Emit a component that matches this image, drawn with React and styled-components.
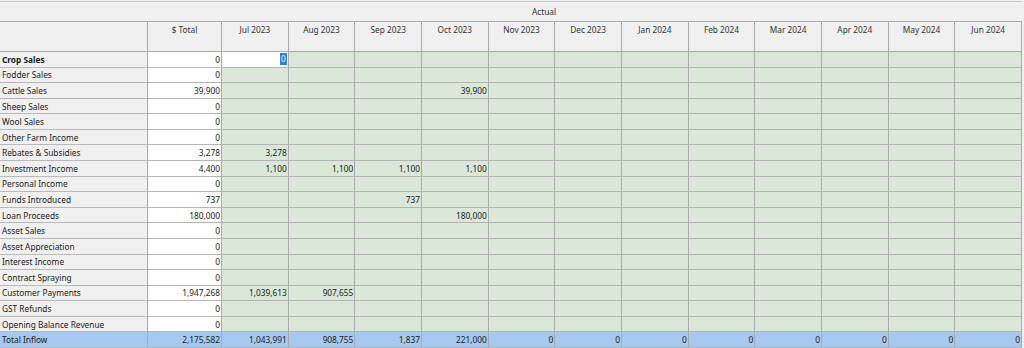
import React from 'react';
import styled, { createGlobalStyle } from 'styled-components';

const months = ['Jul 2023', 'Aug 2023', 'Sep 2023', 'Oct 2023', 'Nov 2023', 'Dec 2023', 'Jan 2024', 'Feb 2024', 'Mar 2024', 'Apr 2024', 'May 2024', 'Jun 2024'];

// month values keyed by column index
const rows = [
  { label: 'Crop Sales', total: '0', bold: true, values: {}, editing: true },
  { label: 'Fodder Sales', total: '0', values: {} },
  { label: 'Cattle Sales', total: '39,900', values: { 3: '39,900' } },
  { label: 'Sheep Sales', total: '0', values: {} },
  { label: 'Wool Sales', total: '0', values: {} },
  { label: 'Other Farm Income', total: '0', values: {} },
  { label: 'Rebates & Subsidies', total: '3,278', values: { 0: '3,278' } },
  { label: 'Investment Income', total: '4,400', values: { 0: '1,100', 1: '1,100', 2: '1,100', 3: '1,100' } },
  { label: 'Personal Income', total: '0', values: {} },
  { label: 'Funds Introduced', total: '737', values: { 2: '737' } },
  { label: 'Loan Proceeds', total: '180,000', values: { 3: '180,000' } },
  { label: 'Asset Sales', total: '0', values: {} },
  { label: 'Asset Appreciation', total: '0', values: {} },
  { label: 'Interest Income', total: '0', values: {} },
  { label: 'Contract Spraying', total: '0', values: {} },
  { label: 'Customer Payments', total: '1,947,268', values: { 0: '1,039,613', 1: '907,655' } },
  { label: 'GST Refunds', total: '0', values: {} },
  { label: 'Opening Balance Revenue', total: '0', values: {} },
];

const totals = ['1,043,991', '908,755', '1,837', '221,000', '0', '0', '0', '0', '0', '0', '0', '0'];

const App = () => {
  return (
    <>
      <GlobalStyle />
      <Sheet>
        <Band>Actual</Band>
        <HeaderCell />
        <HeaderCell>$ Total</HeaderCell>
        {months.map((m) => (
          <HeaderCell key={m}>{m}</HeaderCell>
        ))}

        {rows.map((r) => (
          <React.Fragment key={r.label}>
            <LabelCell $bold={r.bold}>{r.label}</LabelCell>
            <NumCell $kind="total">{r.total}</NumCell>
            {months.map((m, i) =>
              r.editing && i === 0 ? (
                <NumCell key={m} $kind="total">
                  <Selected>0</Selected>
                </NumCell>
              ) : (
                <NumCell key={m} $kind="month">{r.values[i] || ''}</NumCell>
              )
            )}
          </React.Fragment>
        ))}

        <LabelCell $kind="sum">Total Inflow</LabelCell>
        <NumCell $kind="sum">2,175,582</NumCell>
        {totals.map((t, i) => (
          <NumCell key={i} $kind="sum">{t}</NumCell>
        ))}
      </Sheet>
    </>
  );
};

export default App;

const GlobalStyle = createGlobalStyle`
  body {
    margin: 0;
    background: #f0f0f0;
    font-family: 'Noto Sans', 'Open Sans', sans-serif;
    overflow: hidden;
  }
`;

const Sheet = styled.div`
  display: grid;
  width: 1022px;
  padding-top: 1px;
  grid-template-columns: 148px 74px repeat(12, 1fr);
  grid-template-rows: 21px 30px;
  grid-auto-rows: calc(296px / 19);
  font-size: 8.3px;
  color: #1a1a1a;
`;

const Band = styled.div`
  grid-column: 1 / -1;
  box-sizing: border-box;
  border-top: 1px solid #cbcbcb;
  border-bottom: 1px solid #a9a9a9;
  background: #f0f0f0;
  display: flex;
  align-items: center;
  justify-content: center;
  padding-left: 66px;
  color: #333;
`;

const HeaderCell = styled.div`
  box-sizing: border-box;
  background: #f0f0f0;
  border-right: 1px solid #a9a9a9;
  border-bottom: 1px solid #a9a9a9;
  text-align: center;
  padding-top: 2px;
  line-height: 12px;
  color: #333;
`;

const cellColors = {
  total: '#ffffff',
  month: '#dae7d9',
  sum: '#a8c9ef',
};

const LabelCell = styled.div`
  box-sizing: border-box;
  background: ${(p) => (p.$kind === 'sum' ? cellColors.sum : '#f0f0f0')};
  border-right: 1px solid #a9a9a9;
  border-bottom: 1px solid #b9b9b9;
  padding-left: 2px;
  display: flex;
  align-items: center;
  font-weight: ${(p) => (p.$bold ? 700 : 400)};
  white-space: nowrap;
`;

const NumCell = styled.div`
  box-sizing: border-box;
  background: ${(p) => cellColors[p.$kind]};
  border-right: 1px solid #a9a9a9;
  border-bottom: 1px solid #b4b4b4;
  padding-right: 1px;
  display: flex;
  align-items: center;
  justify-content: flex-end;
  white-space: nowrap;
`;

const Selected = styled.span`
  background: #2f7fdc;
  color: #e8f0ff;
  padding: 1px 1px;
  line-height: 10px;
`;
